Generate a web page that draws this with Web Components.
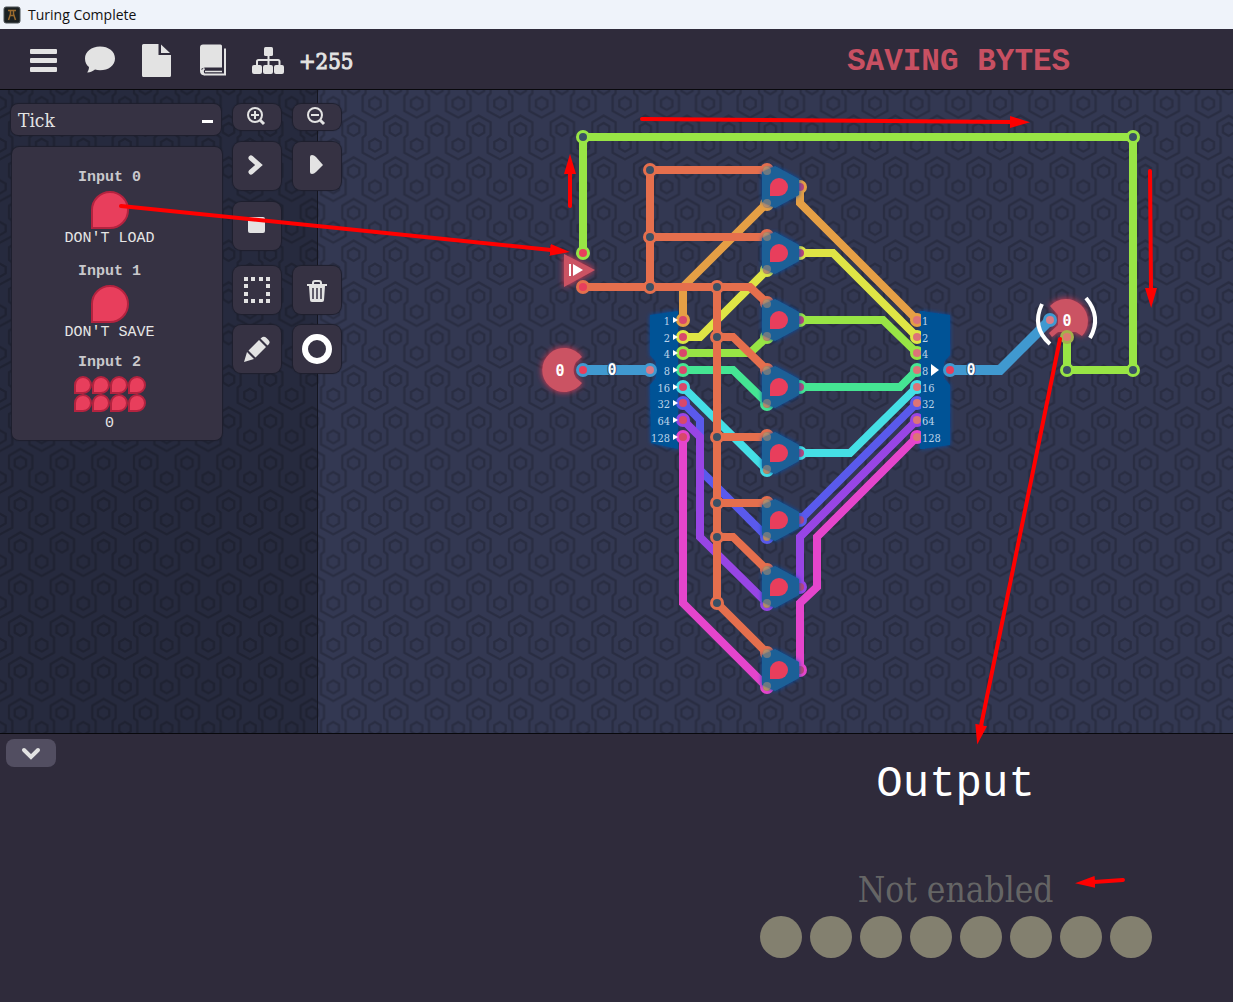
<!DOCTYPE html>
<html lang="en">
<head>
<meta charset="utf-8">
<title>Turing Complete</title>
<style>
html, body { margin: 0; height: 100%; }
body {
  --ink: #e3e3e3; --bar: #2f2b3b; --panel: #363243;
  --slab: "DejaVu Serif Condensed", "DejaVu Serif", serif;
  --mono: "Liberation Mono", monospace;
  background: #2f2b3b; color: #e3e3e3; font-family: "Liberation Mono", monospace;
}
</style>
</head>
<body>
<tc-app></tc-app>
<script>
const define = (name, html) => customElements.define(name, class extends HTMLElement {
  constructor() {
    super();
    this.attachShadow({ mode: 'open' }).innerHTML = typeof html === 'function' ? html(this) : html;
  }
});

/* ---------- window title ---------- */
define('tc-titlebar', `
<style>
:host { display: flex; align-items: center; gap: 7px; height: 29px; padding-left: 3px; background: #eff3fa; color: #111;
  font: 14px/20px "Open Sans", sans-serif; }
svg { display: block; }
</style>
<svg width="18" height="18" viewBox="0 0 18 18" aria-hidden="true">
  <rect x="1" y="1" width="16" height="16" rx="2" fill="#1b2022" stroke="#4a5054"/>
  <path d="M5 4.500h8M7.500 5v3L5.500 14M10.500 5v3l2 6M7 9.500h4" fill="none" stroke="#9c6b2e" stroke-width="1.500"/>
</svg><slot></slot>`);

/* ---------- toolbar ---------- */
define('tc-toolbar', `
<style>
:host { display: flex; align-items: center; height: 60px; background: var(--bar); border-bottom: 1px solid #08080c; }
nav { display: flex; align-items: center; flex: 1; padding: 3px 0 0 26px; gap: 20px; }
button { all: unset; display: block; width: 36px; height: 36px; cursor: pointer; }
svg { display: block; fill: var(--ink); }
output { font: 22px/30px var(--slab); margin: 2px 0 0 -7px; -webkit-text-stroke: 1px var(--ink); }
h1 { box-sizing: border-box; width: 45%; margin: 0; padding: 5px 0 0 6px; text-align: center;
  font: bold 31px/40px var(--mono); color: #c85062; }
</style>
<nav>
  <button aria-label="Menu"><svg width="36" height="36"><rect x="4" y="6" width="27" height="5" rx="1"/><rect x="4" y="15" width="27" height="5" rx="1"/><rect x="4" y="24" width="27" height="5" rx="1"/></svg></button>
  <button aria-label="Dialogue"><svg width="36" height="36"><path d="M18 3.500C9.500 3.500 3 8.500 3 15.500c0 4 1.500 6.500 4 8.500 0 2-.8 4-1.800 5.500 3.500 0 6-1.500 7.800-3 1.500.5 3.200.7 5 .7 8.500 0 15-4.500 15-11.700S26.500 3.500 18 3.500z"/></svg></button>
  <button aria-label="File"><svg width="36" height="36"><path d="M5.500 1H20.500v11H33V32.500a1.500 1.500 0 0 1-1.500 1.500h-26A1.500 1.500 0 0 1 4 32.500V2.500A1.500 1.500 0 0 1 5.500 1z"/><path d="M23 1.500l9 8.500h-9z"/></svg></button>
  <button aria-label="Manual"><svg width="36" height="36"><path d="M9 1.500h17.500q1.500 0 1.500 1.500v21.500H11q-3 0-5 2.500V4.500q0-3 3-3z"/><path d="M31 5.500V31.500H10.500a3.500 3.500 0 0 1 0-6" fill="none" stroke="#e3e3e3" stroke-width="2"/><path d="M6 25v3q0 4 4.500 4.500L9 28z"/><path d="M11 28.500h17" stroke="#e3e3e3" stroke-width="1.500"/></svg></button>
  <button aria-label="Progress"><svg width="36" height="36"><rect x="14" y="4" width="9" height="9" rx="1.500"/><rect x="2" y="22" width="10" height="9" rx="2"/><rect x="13" y="22" width="10" height="9" rx="2"/><rect x="24" y="22" width="10" height="9" rx="2"/><path d="M18.500 12v10M7 22v-3.500q0-1.500 1.500-1.500h19.500q1.500 0 1.500 1.500V22" fill="none" stroke="#e3e3e3" stroke-width="2"/></svg></button>
  <output>+255</output>
</nav>
<h1><slot></slot></h1>`);

/* ---------- input readouts ---------- */
define('tc-bit', `
<style>
:host { display: block; box-sizing: border-box; width: 38px; height: 38px; background: #e83e5c; border: 2px solid #b3233f; border-radius: 50% 50% 50% 0; }
:host([small]) { width: 18px; height: 18px; }
</style>`);

define('tc-input', `
<style>
:host { display: flex; flex-direction: column; align-items: center; }
h2 { margin: 0 0 2px; font: bold 15px/22px var(--mono); color: #c9c8cc; }
p { margin: 0; font: 15px/20px var(--mono); color: #e6e6e6; }
</style>
<h2><slot name="label"></slot></h2>
<slot></slot>
<p><slot name="value"></slot></p>`);

define('tc-inputs', `
<style>
:host { display: flex; flex-direction: column; gap: 12px; width: 210px; flex: none; }
button { all: unset; box-sizing: border-box; display: flex; justify-content: space-between; align-items: center; height: 31px; padding: 0 8px 0 7px;
  background: var(--panel); border-radius: 7px; font: 19px/30px var(--slab); box-shadow: 0 0 1px 1px #1e1f2d; cursor: pointer; }
i { width: 11px; height: 3px; background: #fff; margin-top: 4px; }
section { box-sizing: border-box; display: flex; flex-direction: column; gap: 12px; padding: 20px 15px 6px 0; margin: 0 -1px 0 1px;
  background: var(--panel); border-radius: 7px; box-shadow: 0 0 1px 1px #1e1f2d; }
.byte { display: grid; grid-template-columns: repeat(4, 18px); height: 38px; align-content: start; }
.last { margin-top: -3px; }
</style>
<button><span>Tick</span><i></i></button>
<section>
  <tc-input><span slot="label">Input 0</span><tc-bit></tc-bit><span slot="value">DON'T LOAD</span></tc-input>
  <tc-input><span slot="label">Input 1</span><tc-bit></tc-bit><span slot="value">DON'T SAVE</span></tc-input>
  <tc-input class="last"><span slot="label">Input 2</span><div class="byte">${'<tc-bit small></tc-bit>'.repeat(8)}</div><span slot="value">0</span></tc-input>
</section>`);

/* ---------- tool buttons ---------- */
define('tc-tool', el => `
<style>
:host { display: block; width: 48px; height: 48px; }
:host([short]) { height: 26px; }
button { all: unset; display: block; width: 100%; height: 100%; background: var(--panel); border-radius: 8px; box-shadow: 0 0 1px 1px #1e1f2d; cursor: pointer; }
::slotted(svg) { display: block; }
</style>
<button aria-label="${el.getAttribute('label')}"><slot></slot></button>`);

const dots = [11, 18, 26, 33].flatMap(x => [11, 18, 26, 33].filter(y => x === 11 || x === 33 || y === 11 || y === 33)
  .map(y => `<rect x="${x}" y="${y}" width="4" height="4"/>`)).join('');
const tool = (label, body, short) => `<tc-tool label="${label}"${short ? ' short' : ''}><svg width="48" height="${short ? 26 : 48}" fill="#e3e3e3">${body}</svg></tc-tool>`;
const glass = sign => `<circle cx="22" cy="11" r="7" fill="none" stroke="#e3e3e3" stroke-width="2"/><path d="M27 16l4 4" stroke="#e3e3e3" stroke-width="3"/><path d="${sign}" stroke="#e3e3e3" stroke-width="2"/>`;

define('tc-tools', `
<style>
:host { display: flex; flex-direction: column; gap: 16px; flex: none; }
div { display: grid; grid-template-columns: 48px 48px; gap: 12px; }
div + div { row-gap: 11px; }
</style>
<div>
${tool('Zoom in', glass('M18 11h8M22 7v8'), true)}
${tool('Zoom out', glass('M18 11h8'), true)}
${tool('Step', '<path d="M18 16l8 7-8 7" fill="none" stroke="#e3e3e3" stroke-width="5" stroke-linecap="round"/>')}
${tool('Run', '<path d="M17 15q0-2 2-2 2 0 4 2l7 8-7 7q-2 2-4 2-2 0-2-2z"/>')}
${tool('Stop', '<rect x="15" y="15" width="17" height="16" rx="2"/>')}
</div>
<div>
${tool('Select', dots)}
${tool('Delete', '<path d="M14 18h20v2H14zM16 20h16l-1 14q0 2-2 2H19q-2 0-2-2z"/><path d="M20 18v-1q0-2 2-2h4q2 0 2 2v1" fill="none" stroke="#e3e3e3" stroke-width="2"/><path d="M20 22v11M24 22v11M28 22v11" stroke="#363243" stroke-width="1.500"/>')}
${tool('Draw', '<path d="M11 37l3-10 7 7zM15.500 25.500L26 15l7 7-10.500 10.500zM27.500 13.500l2-1.500q2-1 4 1l2 2q2 2 .5 4l-1.500 1.500z"/>')}
${tool('Wire colour', '<circle cx="24" cy="24" r="12" fill="none" stroke="#fff" stroke-width="6"/>')}
</div>`);

/* ---------- circuit canvas ---------- */
const C = { lime: '#98e545', coral: '#e56f4d', orange: '#e59f45', yellow: '#dfe545', teal: '#45e593',
  cyan: '#45dfe5', blue: '#5a5aec', purple: '#9845e5', pink: '#e545cc', sky: '#4099d0' };
const bits = [C.orange, C.yellow, C.lime, C.teal, C.cyan, C.blue, C.purple, C.pink];
const pinY = [320, 337, 353, 370, 387, 403, 420, 437];
const gateY = [187, 253, 320, 387, 453, 520, 587, 670];
const values = [1, 2, 4, 8, 16, 32, 64, 128];
const wire = (c, pts, w = 8) => `<polyline points="${pts}" stroke="${c}" stroke-width="${w}"/>`;
const pin = (x, y, c, inner = '#d9486b') => `<circle cx="${x}" cy="${y}" r="7" fill="${c}"/><circle cx="${x}" cy="${y}" r="4" fill="${inner}"/>`;
const joint = (x, y, c) => pin(x, y, c, '#3a5065');
const wires = [
  [C.pink, '683,437 683,603 767,687'], [C.pink, '800,670 800,603 817,587 817,537 917,437'],
  [C.blue, '683,403 700,420 700,470 767,537'], [C.blue, '800,520 917,403'],
  [C.purple, '683,420 700,437 700,537 767,603'], [C.purple, '800,587 800,537 917,420'],
  [C.cyan, '683,387 767,470'], [C.cyan, '800,453 850,453 917,387'],
  [C.teal, '683,370 733,370 767,403'], [C.teal, '800,387 900,387 917,370'],
  [C.lime, '683,353 750,353 767,337'], [C.lime, '800,320 883,320 917,353'],
  [C.yellow, '683,337 700,337 767,270'], [C.yellow, '800,253 833,253 917,337'],
  [C.orange, '683,320 683,287 767,203'], [C.orange, '800,187 800,203 917,320'],
  [C.lime, '583,253 583,137 1133,137 1133,370 1067,370 1067,337'],
  [C.coral, '583,287 750,287 767,303'], [C.coral, '650,287 650,170 767,170'], [C.coral, '650,237 767,237'],
  [C.coral, '717,287 717,603 767,653'], [C.coral, '717,337 733,337 767,370'], [C.coral, '717,437 767,437'],
  [C.coral, '717,503 767,503'], [C.coral, '717,537 733,537 767,570'],
  [C.sky, '583,370 650,370', 10], [C.sky, '950,370 1000,370 1050,320', 10]
].map(w => wire(...w)).join('');
const gates = gateY.map((y, i) => `
  ${pin(767, y - 17, C.coral, '#b98a5d')}${pin(767, y + 17, bits[i], '#b98a5d')}${pin(800, y, bits[i], '#b8457a')}
  <path transform="translate(0 ${y})" filter="url(#halo)" fill="#1d6097" d="M762-15L775-21 799-8V8L775 21 762 15z"/>
  <g opacity=".4" fill="#e59f65"><circle cx="767" cy="${y - 16}" r="4"/><circle cx="767" cy="${y + 16}" r="4"/></g>
  <path transform="translate(770 ${y - 9})" fill="#e83e5c" d="M0 18V9A9 9 0 1 1 9 18z"/>`).join('');

define('tc-circuit', `
<style>
:host { display: block; }
svg { display: block; width: 100%; height: 100%; }
.label { font: 11px "DejaVu Serif Condensed", "DejaVu Serif", serif; fill: #bcd3ea; }
.value { font: bold 15px "DejaVu Sans Mono", monospace; fill: #fff; text-anchor: middle; }
.on-wire { stroke: #2b4a70; stroke-width: 2px; paint-order: stroke; }
</style>
<svg aria-label="Circuit board">
  <defs>
    <pattern id="hex" width="125" height="125" patternUnits="userSpaceOnUse" patternTransform="translate(0 550) scale(.33333)">
      <g fill="none" stroke="#292d42" stroke-width="7">
        <g id="row"><path d="M-1 182L0 183 37 163V118L27 110V72L61 52 97 72V110L88 118V163L125 183l1-1"/>
        <path d="M61 74l17 10v19l-17 10-17-10V84z"/><path d="M125 121l17 10v19l-17 10-17-10v-19zM0 121l17 10v19L0 160l-17-10v-19z"/></g>
        <use href="#row" y="-125"/>
      </g>
    </pattern>
    <filter id="halo" x="-50%" y="-50%" width="200%" height="200%"><feDropShadow dx="0" dy="0" stdDeviation="2" flood-color="#0f4fae"/></filter>
    <filter id="glow" x="-50%" y="-50%" width="200%" height="200%"><feDropShadow dx="0" dy="0" stdDeviation="3" flood-color="#f03a55"/></filter>
  </defs>
  <rect width="100%" height="100%" fill="#333852"/>
  <rect width="100%" height="100%" fill="url(#hex)"/>
  <g transform="translate(0 -90)">
    <g filter="url(#halo)" fill="#035296">
      <path d="M650 315L678 311V449L651 443 650 385 656 378V362L650 355z"/>
      <path d="M920 311L950 315V355L944 362V378L950 385V445L920 449z"/>
    </g>
    <g fill="#cb5264" filter="url(#glow)">
      <path d="M582 357L576 362Q571 370 576 378L582 383A22 22 0 1 1 582 357z"/>
      <path d="M564 254L595 270 564 287z"/>
      <path d="M1050 306A21 21 0 1 1 1082 336L1076 332H1058L1052 337 1049 333 1058 325V315z"/>
    </g>
    <g fill="none">${wires}</g>
    ${gates}
    ${pinY.map((y, i) => pin(683, y, bits[i]) + pin(917, y, bits[i], '#dc7478')).join('')}
    <path d="M921 311V449H925V311z" fill="#035296"/>
    ${[[583, 137], [1133, 137], [1133, 370], [1067, 370]].map(p => joint(...p, C.lime)).join('')}
    ${[[650, 170], [650, 237], [650, 287], [717, 287], [717, 337], [717, 437], [717, 503], [717, 537], [717, 603]].map(p => joint(...p, C.coral)).join('')}
    ${pin(583, 253, C.lime, '#e83e5c')}${pin(583, 287, C.coral, '#e83e5c')}
    ${pin(583, 370, C.sky, '#e83e5c')}${pin(650, 370, C.sky, '#d87c88')}${pin(950, 370, C.sky, '#e83e5c')}${pin(1050, 320, C.sky, '#d87c88')}
    ${pin(1067, 337, '#a5b04c', '#dc7a70')}
    <g class="label">
      ${values.map((v, i) => `<text x="670" y="${pinY[i] + 5}" text-anchor="end">${v}</text><text x="922" y="${pinY[i] + 5}">${v}</text>
      <path d="M673 ${pinY[i] - 3}l5 3-5 3z" fill="#fff"/>`).join('')}
    </g>
    <g fill="#fff"><path d="M931 364l8 6-8 6z"/><path d="M573 264l10 6-10 6z"/><path d="M569 264h2v12h-2z"/></g>
    <g fill="none" stroke="#fff" stroke-width="4"><path d="M1042 304Q1031 327 1050 344M1086 298Q1102 317 1090 338"/></g>
    <g class="value">
      <text x="560" y="376">0</text><text x="1067" y="326">0</text>
      <text class="on-wire" x="612" y="375">0</text><text class="on-wire" x="971" y="375">0</text>
    </g>
  </g>
</svg>`);

define('tc-board', `
<style>
:host { display: flex; position: relative; flex: 1; min-height: 0; }
tc-circuit { position: absolute; inset: 0; }
aside { box-sizing: border-box; position: relative; display: flex; align-items: flex-start; gap: 12px; width: 318px; padding: 14px 0 0 11px;
  background: rgba(0, 0, 0, .24); border-right: 1px solid #14151f; }
</style>
<tc-circuit></tc-circuit>
<aside><tc-inputs></tc-inputs><tc-tools></tc-tools></aside>`);

/* ---------- output drawer ---------- */
define('tc-output', `
<style>
:host { display: flex; justify-content: space-between; align-items: flex-start; box-sizing: border-box; height: 269px; background: var(--bar); border-top: 1px solid #08080c; }
button { all: unset; display: block; margin: 5px 0 0 6px; width: 50px; height: 28px; border-radius: 8px; background: #524e61; cursor: pointer; }
svg { display: block; }
section { display: flex; flex-direction: column; align-items: center; width: 45%; padding-top: 24px; }
h2 { margin: 0; font: 44px/52px var(--mono); color: #fff; }
p { margin: 58px 0 0; font: 35px/44px var(--slab); color: #656565; }
div { display: flex; gap: 8px; margin-top: 4px; }
b { width: 42px; height: 42px; border-radius: 50%; background: #83806f; }
</style>
<button aria-label="Collapse"><svg width="50" height="28"><path d="M18 11l7 7 7-7" fill="none" stroke="#e3e3e3" stroke-width="4" stroke-linecap="round"/></svg></button>
<section>
  <h2>Output</h2>
  <p>Not enabled</p>
  <div>${'<b></b>'.repeat(8)}</div>
</section>`);

/* ---------- red annotation arrows ---------- */
define('tc-arrows', `
<style>
:host { position: absolute; inset: 0; pointer-events: none; overflow: hidden; }
svg { display: block; width: 100%; height: 100%; }
</style>
<svg aria-hidden="true">
  <defs><marker id="tip" markerUnits="userSpaceOnUse" markerWidth="20" markerHeight="12" refX="1" refY="6" orient="auto"><path d="M0 0L20 6 0 12z" fill="#f00"/></marker></defs>
  <g stroke="#f00" stroke-width="4" stroke-linecap="round">
    ${[[121, 206, 551, 250], [570, 206, 570, 173], [642, 119, 1011, 122], [1150, 171, 1151, 289], [1060, 339, 981, 726], [1123, 880, 1094, 882]]
      .map(([a, b, c, d]) => `<line x1="${a}" y1="${b}" x2="${c}" y2="${d}" marker-end="url(#tip)"/>`).join('')}
  </g>
</svg>`);

define('tc-app', `
<style>
:host { display: flex; flex-direction: column; position: relative; min-height: 100vh; }
</style>
<tc-titlebar>Turing Complete</tc-titlebar>
<tc-toolbar>SAVING BYTES</tc-toolbar>
<tc-board></tc-board>
<tc-output></tc-output>
<tc-arrows></tc-arrows>`);
</script>
</body>
</html>
